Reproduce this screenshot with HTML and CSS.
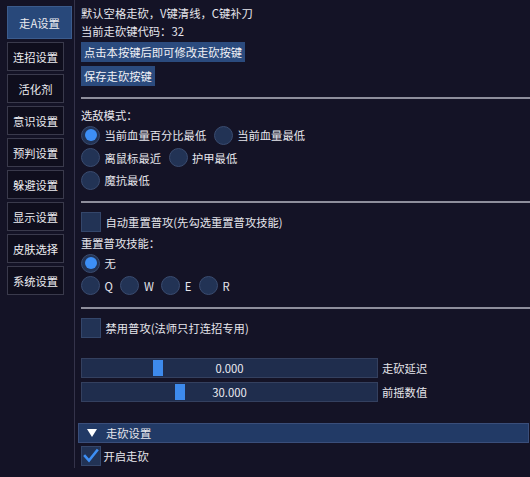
FILE: index.html
```html
<!DOCTYPE html>
<html lang="zh-CN">
<head>
<meta charset="utf-8">
<link rel="stylesheet" href="styles.css">
</head>
<body>
<div class="app">
  <nav class="sidebar">
    <div class="tab active">走A设置</div>
    <div class="tab">连招设置</div>
    <div class="tab">活化剂</div>
    <div class="tab">意识设置</div>
    <div class="tab">预判设置</div>
    <div class="tab">躲避设置</div>
    <div class="tab">显示设置</div>
    <div class="tab">皮肤选择</div>
    <div class="tab">系统设置</div>
  </nav>
  <main class="content">
    <div class="txt">默认空格走砍，V键清线，C键补刀</div>
    <div class="txt mt4">当前走砍键代码：32</div>
    <div class="btn mt4">点击本按键后即可修改走砍按键</div>
    <div class="btn mt35">保存走砍按键</div>
    <div class="sep sep1"></div>

    <div class="txt sect">选敌模式：</div>
    <div class="row mt35">
      <span class="radio on"></span><span class="lbl">当前血量百分比最低</span>
      <span class="radio"></span><span class="lbl">当前血量最低</span>
    </div>
    <div class="row mt35">
      <span class="radio"></span><span class="lbl">离鼠标最近</span>
      <span class="radio"></span><span class="lbl">护甲最低</span>
    </div>
    <div class="row mt35">
      <span class="radio"></span><span class="lbl">魔抗最低</span>
    </div>
    <div class="sep sep2"></div>

    <div class="row cbrow">
      <span class="check"></span><span class="lbl">自动重置普攻(先勾选重置普攻技能)</span>
    </div>
    <div class="txt mt4">重置普攻技能：</div>
    <div class="row mt35">
      <span class="radio on"></span><span class="lbl">无</span>
    </div>
    <div class="row mt35">
      <span class="radio"></span><span class="lbl">Q</span>
      <span class="radio"></span><span class="lbl">W</span>
      <span class="radio"></span><span class="lbl">E</span>
      <span class="radio"></span><span class="lbl">R</span>
    </div>
    <div class="sep sep2"></div>

    <div class="row cbrow">
      <span class="check"></span><span class="lbl">禁用普攻(法师只打连招专用)</span>
    </div>

    <div class="slider-row first">
      <div class="slider"><span class="grab" style="left:71px"></span><span class="val">0.000</span></div>
      <span class="slbl">走砍延迟</span>
    </div>
    <div class="slider-row">
      <div class="slider"><span class="grab" style="left:93px"></span><span class="val">30.000</span></div>
      <span class="slbl">前摇数值</span>
    </div>

    <div class="header"><span class="arrow"></span><span class="htxt">走砍设置</span></div>
    <div class="row mt35">
      <span class="check checked"><svg width="20" height="20" viewBox="0 0 20 20"><polyline points="4,10 8,14.5 16,4.5" fill="none" stroke="#3d8ff5" stroke-width="2.6" stroke-linecap="square"/></svg></span><span class="lbl tight">开启走砍</span>
    </div>
  </main>
</div>
</body>
</html>
```
FILE: styles.css
```css
* { box-sizing: border-box; margin: 0; padding: 0; }
html, body {
  width: 530px;
  height: 477px;
  overflow: hidden;
  background: #141326;
}
body {
  font-family: "Noto Sans CJK SC", "Noto Sans", sans-serif;
  font-size: 11.3px;
  color: #e6e6ec;
}
.app {
  display: flex;
  align-items: flex-start;
}
.sidebar {
  width: 74px;
  padding: 6px 0 0 7px;
  display: flex;
  flex-direction: column;
  gap: 3px;
}
.tab {
  width: 57px;
  height: 29px;
  background: #0f0e1d;
  border: 1px solid #3a3a4c;
  display: flex;
  align-items: center;
  justify-content: center;
  color: #ececf0;
  line-height: 14px;
}
.tab.active {
  width: 65px;
  height: 33px;
  background: #28487a;
  border-color: #3b5b8c;
}
.content {
  flex: 1;
  height: 468px;
  border-left: 1px solid #34334a;
  padding: 6px 0 0 6px;
}
.txt {
  line-height: 14px;
  height: 14px;
  white-space: nowrap;
}
.mt4 { margin-top: 4px; }
.mt35 { margin-top: 3.5px; }
.btn {
  display: inline-flex;
  align-items: center;
  height: 20px;
  padding: 0 3px;
  background: #2b4b7e;
  color: #f2f2f6;
  line-height: 14px;
}
.btn + .btn { display: flex; width: max-content; }
.btn.mt4 { display: flex; width: max-content; }
.sep {
  height: 2px;
  background: #8e8e9c;
}
.sep1 { margin-top: 11px; }
.sep2 { margin-top: 11.5px; }
.sect { margin-top: 9.5px; }
.row {
  display: flex;
  align-items: center;
  height: 19px;
}
.radio {
  width: 19px;
  height: 19px;
  border-radius: 50%;
  background: #223355;
  border: 1px solid #3a4c70;
  display: flex;
  align-items: center;
  justify-content: center;
  flex: none;
}
.radio.on::after {
  content: "";
  width: 12px;
  height: 12px;
  border-radius: 50%;
  background: #3d8ff6;
}
.lbl {
  margin-left: 4.5px;
  margin-right: 7.5px;
  white-space: nowrap;
  line-height: 14px;
}
.lbl.tight { margin-left: 2.5px; }
.cbrow {
  margin-top: 9px;
  height: 20px;
}
.check {
  width: 20px;
  height: 20px;
  background: #223355;
  border: 1px solid #34466a;
  flex: none;
  position: relative;
}
.check svg {
  position: absolute;
  left: -1px;
  top: -1px;
}
.slider-row {
  display: flex;
  align-items: center;
  margin-top: 4px;
  height: 20px;
}
.slider-row.first { margin-top: 20.5px; }
.slider {
  position: relative;
  width: 297px;
  height: 20px;
  background: #1f2d4d;
  border: 1px solid #34405f;
  display: flex;
  align-items: center;
  justify-content: center;
}
.grab {
  position: absolute;
  top: 1px;
  width: 10px;
  height: 16px;
  background: #3d8aec;
}
.val {
  position: relative;
  line-height: 14px;
  color: #ececf2;
}
.slbl {
  margin-left: 4px;
  line-height: 14px;
}
.header {
  margin: 21px 1px 0 -3px;
  height: 20px;
  background: #223a66;
  border: 1px solid #3a4e7a;
  display: flex;
  align-items: center;
  padding-left: 8px;
}
.arrow {
  width: 0;
  height: 0;
  border-left: 5px solid transparent;
  border-right: 5px solid transparent;
  border-top: 8px solid #ffffff;
}
.htxt {
  margin-left: 9px;
  line-height: 14px;
}
```
